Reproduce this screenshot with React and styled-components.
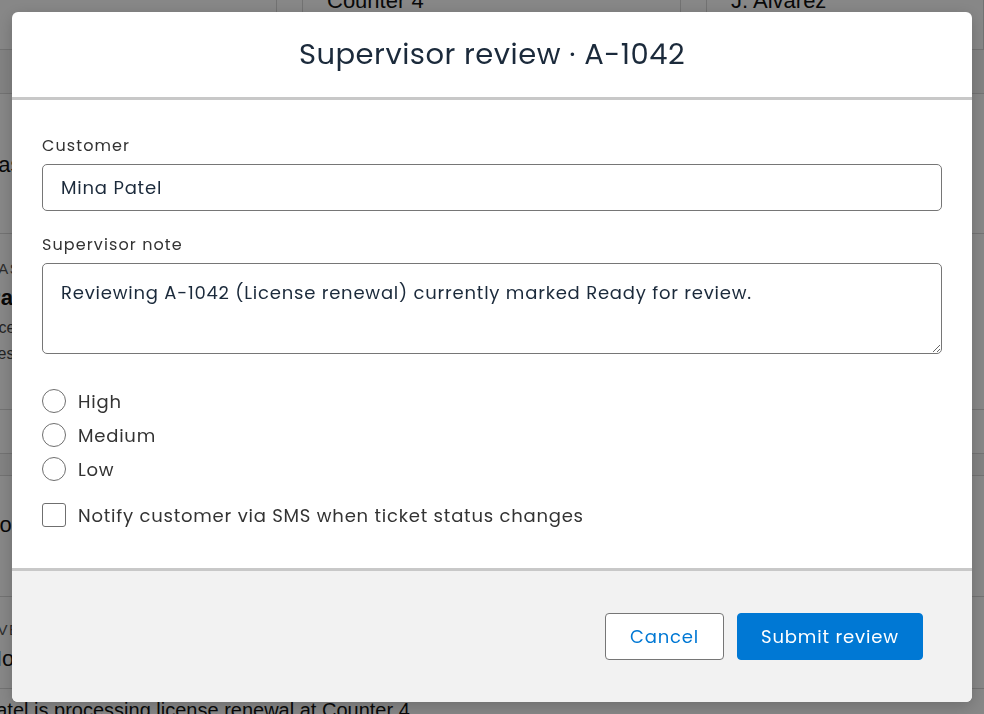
import React, { useState } from 'react';
import styled, { createGlobalStyle } from 'styled-components';

const GlobalStyle = createGlobalStyle`
	html, body {
		margin: 0;
		padding: 0;
		height: 100%;
		overflow: hidden;
		background: #ffffff;
	}
	* {
		box-sizing: border-box;
	}
`;

const uiFont = `"Poppins", Inter, "Noto Sans", sans-serif`;

/* ---- page behind the dialog ---- */

const Page = styled.div`
	margin: -18px 0 0 -14px;
	font-family: "Liberation Sans", Arial, sans-serif;
	color: #111;
`;

const CounterGrid = styled.div`
	display: grid;
	grid-template-columns: 291px 379px 1fr;
	gap: 25px;
`;

const CounterCell = styled.div`
	border-left: ${p => (p.first ? 'none' : '1px solid #d8d8d8')};
	border-right: 1px solid #d8d8d8;
	border-bottom: 1px solid #d8d8d8;
	padding: 6px 24px 20px;
	font-size: 22px;
	height: 68px;
`;

const Band = styled.div`
	height: ${p => p.h || 44}px;
	border-bottom: 1px solid #d8d8d8;
	background: ${p => (p.shade ? '#f6f6f6' : '#fff')};
`;

const Section = styled.div`
	padding: ${p => p.pad || '16px 0'};
	border-bottom: 1px solid #d8d8d8;
	height: ${p => p.h}px;
	display: flex;
	flex-direction: column;
	gap: 8px;
`;

const Big = styled.div`
	font-size: 22px;
	font-weight: ${p => (p.bold ? 700 : 400)};
`;

const Caps = styled.div`
	font-size: 15px;
	letter-spacing: 1.5px;
	color: #555;
	text-transform: uppercase;
`;

const Small = styled.div`
	font-size: 16px;
	color: #444;
`;

const Ticker = styled.div`
	font-size: 20px;
	color: #111;
	padding-top: 10px;
	margin-left: -52px;
	white-space: nowrap;
`;

/* ---- dialog ---- */

const Overlay = styled.div`
	position: fixed;
	inset: 0;
	background: rgba(0, 0, 0, 0.47);
	padding: 12px;
	display: flex;
	align-items: flex-start;
	justify-content: center;
`;

const Dialog = styled.div`
	width: 960px;
	height: 690px;
	background: #fff;
	border-radius: 6px;
	overflow: hidden;
	display: flex;
	flex-direction: column;
	font-family: ${uiFont};
	box-shadow: 0 4px 16px rgba(0, 0, 0, 0.2);
`;

const Header = styled.div`
	flex: 0 0 88px;
	border-bottom: 3px solid #c8c8c8;
	display: flex;
	align-items: center;
	justify-content: center;
`;

const Title = styled.h2`
	margin: 0;
	font-size: 29px;
	font-weight: 400;
	letter-spacing: 0.5px;
	color: #1b2a3b;
`;

const Body = styled.div`
	flex: 1 1 auto;
	padding: 34px 30px 0;
	display: flex;
	flex-direction: column;
`;

const Label = styled.label`
	display: block;
	font-size: 16px;
	line-height: 24px;
	letter-spacing: 1.1px;
	color: #333;
	margin: ${p => (p.spaced ? '22px 0 6px' : '0 0 6px')};
`;

const TextInput = styled.input`
	width: 100%;
	height: 47px;
	border: 1px solid #767676;
	border-radius: 5px;
	padding: 0 18px;
	font-family: ${uiFont};
	font-size: 18px;
	letter-spacing: 0.8px;
	color: #1b2a3b;
	outline: none;
`;

const NoteArea = styled.textarea`
	width: 100%;
	height: 91px;
	border: 1px solid #767676;
	border-radius: 5px;
	padding: 15px 18px;
	font-family: ${uiFont};
	font-size: 18px;
	line-height: 27px;
	letter-spacing: 0.78px;
	color: #1b2a3b;
	resize: vertical;
	outline: none;
	display: block;
`;

const Choices = styled.div`
	margin-top: 30px;
	display: flex;
	flex-direction: column;
`;

const ChoiceRow = styled.label`
	display: flex;
	align-items: center;
	gap: 12px;
	height: 34px;
	margin-top: ${p => (p.gapTop ? '12px' : '0')};
	font-size: 18px;
	letter-spacing: 0.78px;
	color: #333;
	cursor: pointer;
`;

const Mark = styled.span`
	flex: 0 0 24px;
	height: 24px;
	border: 1px solid #6f6f6f;
	border-radius: ${p => (p.round ? '50%' : '3px')};
	background: #fff;
	display: flex;
	align-items: center;
	justify-content: center;
`;

const Dot = styled.span`
	width: 12px;
	height: 12px;
	border-radius: 50%;
	background: #0078d4;
`;

const Footer = styled.div`
	flex: 0 0 134px;
	border-top: 3px solid #c8c8c8;
	background: #f2f2f2;
	display: flex;
	align-items: center;
	justify-content: flex-end;
	gap: 13px;
	padding: 0 49px 0 0;
`;

const Button = styled.button`
	height: 47px;
	padding: 0 20px;
	min-width: ${p => (p.primary ? '186px' : '119px')};
	border: 1px solid ${p => (p.primary ? '#0078d4' : '#767676')};
	border-radius: 4px;
	background: ${p => (p.primary ? '#0078d4' : '#fff')};
	color: ${p => (p.primary ? '#fff' : '#0078d4')};
	font-family: ${uiFont};
	font-size: 18px;
	letter-spacing: 0.85px;
	cursor: pointer;
`;

const priorities = ['High', 'Medium', 'Low'];

const App = () => {
	const [priority, setPriority] = useState(null);
	const [notify, setNotify] = useState(false);

	return (
		<>
			<GlobalStyle />
			<Page>
				<CounterGrid>
					<CounterCell first />
					<CounterCell>Counter 4</CounterCell>
					<CounterCell>J. Alvarez</CounterCell>
				</CounterGrid>
				<Band shade />
				<Section h={140} pad="58px 0 0">
					<Big>Last status</Big>
				</Section>
				<Section h={176} pad="26px 0 0">
					<Caps>Case A-1042</Caps>
					<Big bold>Patel, Mina</Big>
					<Small>License renewal</Small>
					<Small>Desk: Counter 4</Small>
				</Section>
				<Band />
				<Band shade h={22} />
				<Section h={121} pad="36px 0 0">
					<Big>Follow up</Big>
				</Section>
				<Section h={92} pad="24px 0 0">
					<Caps>Event log</Caps>
					<Big>Notified first</Big>
				</Section>
				<Ticker>Mina Patel is processing license renewal at Counter 4</Ticker>
			</Page>

			<Overlay>
				<Dialog role="dialog" aria-modal="true">
					<Header>
						<Title>Supervisor review · A-1042</Title>
					</Header>
					<Body>
						<Label htmlFor="customer">Customer</Label>
						<TextInput id="customer" defaultValue="Mina Patel" />
						<Label htmlFor="note" spaced>Supervisor note</Label>
						<NoteArea
							id="note"
							defaultValue="Reviewing A-1042 (License renewal) currently marked Ready for review."
						/>
						<Choices>
							{priorities.map(p => (
								<ChoiceRow key={p} onClick={() => setPriority(p)}>
									<Mark round>{priority === p && <Dot />}</Mark>
									{p}
								</ChoiceRow>
							))}
							<ChoiceRow gapTop onClick={() => setNotify(!notify)}>
								<Mark>{notify && <Dot />}</Mark>
								Notify customer via SMS when ticket status changes
							</ChoiceRow>
						</Choices>
					</Body>
					<Footer>
						<Button>Cancel</Button>
						<Button primary>Submit review</Button>
					</Footer>
				</Dialog>
			</Overlay>
		</>
	);
};

export default App;
